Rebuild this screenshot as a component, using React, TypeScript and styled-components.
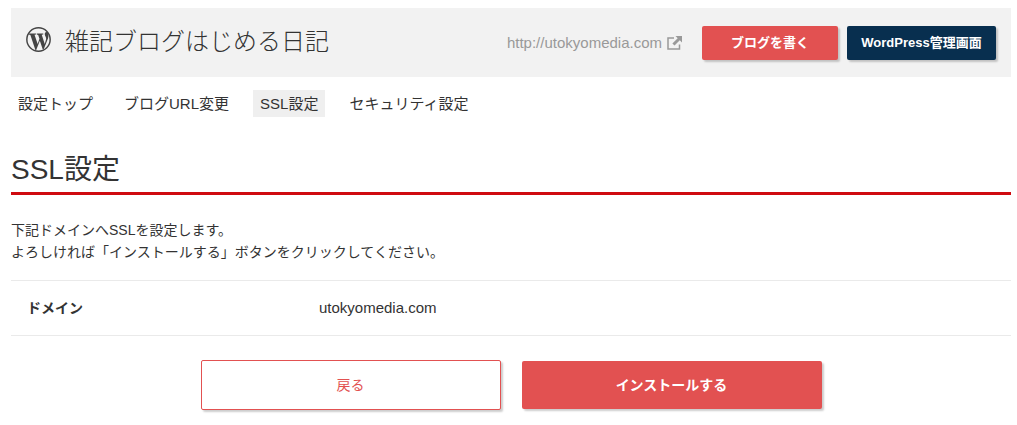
import React from 'react';
import styled, { createGlobalStyle, css } from 'styled-components';

const GlobalStyle = createGlobalStyle`
  *, *::before, *::after { box-sizing: border-box; }
  body {
    margin: 0;
    background: #fff;
    color: #333;
    font: 14px/22px "Liberation Sans", Arial, "Noto Sans CJK JP", sans-serif;
  }
  button { font-family: inherit; cursor: pointer; }
`;

const Page = styled.div`
  padding: 8px 6px 14px 11px;
`;

const Header = styled.header`
  display: flex;
  align-items: center;
  min-height: 69px;
  padding: 0 15px;
  background: #f2f2f2;
`;

const BlogTitle = styled.div`
  display: flex;
  align-items: center;
  gap: 14px;
  margin-right: auto;
  padding-bottom: 2px;
  font-size: 24px;
  line-height: 34px;
  font-weight: 300;
  white-space: nowrap;

  svg {
    width: 25px;
    height: 25px;
    margin-bottom: 4px;
    color: #444;
  }
`;

const SiteLink = styled.a`
  display: flex;
  align-items: center;
  gap: 5px;
  margin-right: 20px;
  color: #999;
  font-size: 15px;
  text-decoration: none;

  svg { width: 15px; height: 14px; }
`;

const HeaderButtons = styled.div`
  display: flex;
  gap: 9px;
`;

const filled = css`
  border: 0;
  color: #fff;
  font-weight: 700;
`;

const HeaderButton = styled.button<{ $navy?: boolean }>`
  ${filled}
  width: ${p => (p.$navy ? 149 : 136)}px;
  height: 34px;
  padding: 0 0 2px;
  border-radius: 2px;
  background: ${p => (p.$navy ? '#082f4f' : '#e25151')};
  box-shadow: 2px 2px 2px rgba(0, 0, 0, 0.2);
  font-size: 13px;
  white-space: nowrap;
`;

const Nav = styled.nav`
  display: flex;
  gap: 17px;
  margin-top: 13px;
`;

const NavLink = styled.a<{ $active?: boolean }>`
  padding: 0 7px;
  background: ${p => (p.$active ? '#efefef' : 'transparent')};
  color: inherit;
  font-size: 15px;
  line-height: 27px;
  text-decoration: none;
`;

const Heading = styled.h1`
  margin: 33px 0 24px;
  padding-bottom: 2px;
  border-bottom: 3px solid #cf0a10;
  font-size: 28px;
  line-height: 40px;
  font-weight: 400;
`;

const Lead = styled.p`
  margin: 0 0 17px;
`;

const DataTable = styled.table`
  width: 100%;
  border-collapse: collapse;

  th, td {
    padding: 16px;
    border-top: 1px solid #eaeaea;
    border-bottom: 1px solid #eaeaea;
    text-align: left;
  }
  th { width: 292px; font-weight: 700; }
  td { font-size: 15px; }
`;

const Actions = styled.div`
  display: flex;
  justify-content: center;
  align-items: center;
  gap: 21px;
  margin-top: 24px;
`;

const ActionButton = styled.button<{ $primary?: boolean }>`
  width: 300px;
  height: 50px;
  padding: 0 0 2px;
  border: 1px solid #e25151;
  border-radius: 2px;
  background: #fff;
  color: #e25151;
  box-shadow: 2px 2px 2px rgba(0, 0, 0, 0.2);
  font-size: 14px;

  ${p => p.$primary && css`
    ${filled}
    height: 48px;
    background: #e25151;
  `}
`;

const WordPressIcon = () => (
  <svg viewBox="0 0 24 24" aria-hidden="true">
    <circle cx="12" cy="12" r="11.2" fill="none" stroke="currentColor" strokeWidth="1.4" />
    <path
      d="M2.6 6.2H9.6V7.2L8.2 7.5L11.2 16.3L12.9 11.2L11.7 7.6L10.3 7.2V6.2H16.6V7.2L15.1 7.5L18 16.2L19.3 11.8C19.8 10 18 8.6 18 6.9C18 5.5 19 4.6 20.2 4.9C21.6 6.4 22 8.4 21.2 10.8L16.9 21.6H16.1L13.3 13.2L9.8 22H9L4.2 7.6L2.6 7.2Z"
      fill="currentColor"
    />
  </svg>
);

const ExternalIcon = () => (
  <svg viewBox="0 0 15 14" fill="none" aria-hidden="true">
    <path d="M7 2H1V13H12.5V8.5" stroke="currentColor" strokeWidth="1.5" />
    <path d="M8.5 0H15V6.5L12.8 4.3L7.5 9.6L5.4 7.5L10.7 2.2Z" fill="currentColor" />
  </svg>
);

const navItems = ['設定トップ', 'ブログURL変更', 'SSL設定', 'セキュリティ設定'];
const current = 'SSL設定';

export default function App() {
  return (
    <Page lang="ja">
      <GlobalStyle />
      <Header>
        <BlogTitle>
          <WordPressIcon />
          <span>雑記ブログはじめる日記</span>
        </BlogTitle>
        <SiteLink href="http://utokyomedia.com">
          http://utokyomedia.com
          <ExternalIcon />
        </SiteLink>
        <HeaderButtons>
          <HeaderButton type="button">ブログを書く</HeaderButton>
          <HeaderButton type="button" $navy>WordPress管理画面</HeaderButton>
        </HeaderButtons>
      </Header>
      <Nav>
        {navItems.map(item => (
          <NavLink
            key={item}
            href="#"
            $active={item === current}
            aria-current={item === current ? 'page' : undefined}
          >
            {item}
          </NavLink>
        ))}
      </Nav>
      <main>
        <Heading>SSL設定</Heading>
        <Lead>
          下記ドメインへSSLを設定します。
          <br />
          よろしければ「インストールする」ボタンをクリックしてください。
        </Lead>
        <DataTable>
          <tbody>
            <tr>
              <th scope="row">ドメイン</th>
              <td>utokyomedia.com</td>
            </tr>
          </tbody>
        </DataTable>
        <Actions>
          <ActionButton type="button">戻る</ActionButton>
          <ActionButton type="button" $primary>インストールする</ActionButton>
        </Actions>
      </main>
    </Page>
  );
}
